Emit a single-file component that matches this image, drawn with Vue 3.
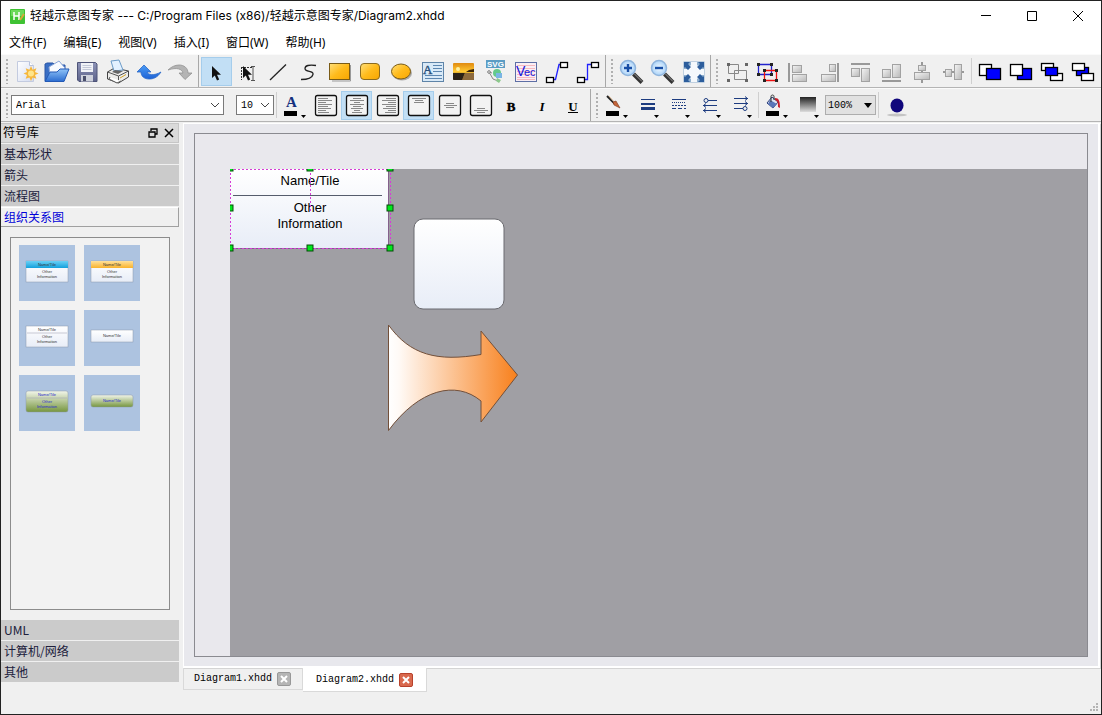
<script setup>
import { ref } from "vue";

const menus = ["文件(F)", "编辑(E)", "视图(V)", "插入(I)", "窗口(W)", "帮助(H)"];

const arrow = '<path d="M22 24h5l-2.500 3z"/>';
const box = '<rect x="5.500" y="4.500" width="21" height="20" rx="2" fill="#f3f3f3" stroke="#111" stroke-width="1.300"/>';
const cursor = (x) =>
    `<path transform="translate(${x} 9)" d="M0 0v12l2.800-2.600 2.200 5 2.200-1-2.200-4.700h4z" fill="#111"/>`;
const grey = 'fill="url(#g-grey)" stroke="#a2a2a2"';
const hollow = 'fill="#fff" stroke="#000" stroke-width="1.300"';
const solid = 'fill="#00f" stroke="#000" stroke-width="1.300"';

// Горизонтальные штрихи: [x1, x2, y]
const strokes = (list) =>
    `<path fill="none" stroke="#888" d="${list.map(([a, b, y]) => `M${a} ${y}.5H${b}`).join("")}"/>`;

const fileTools = [
    {
        name: "新建",
        icon: `<path d="M6.500 4.500h12l4 4v16h-16z" fill="url(#g-page)" stroke="#c3cbe0"/><path d="M18.500 4.500v4h4" fill="#fff" stroke="#b9c2da"/>
        <path d="M20 9l1.700 3.700 3.700-1.400-1.400 3.700 3.500 1.500-3.500 1.600 1.400 3.700-3.700-1.400L20 24l-1.600-3.600-3.700 1.400 1.300-3.700-3.500-1.600 3.500-1.500-1.300-3.700 3.700 1.400z" fill="#f6b73c"/><circle cx="20" cy="16.500" r="3" fill="#ffe58a"/>`,
    },
    {
        name: "打开",
        icon: `<path d="M3 24V7l2-1h6l2 2h10v8z" fill="#3a6fc4" stroke="#2a56a6"/><path d="M7 10l10-6 6 7-4 8H8z" fill="#f7faff" stroke="#8aa5d8"/>
        <path d="M3 24.500l5-9.500h7l3-3h9l-5 12.500z" fill="url(#g-folder)" stroke="#2359b5"/>`,
    },
    {
        name: "保存",
        icon: `<path d="M5 5.500h17.500l1.500 1.500v17.500H6L4.500 23V5.500z" fill="url(#g-disk)" stroke="#4e5478"/><rect x="8" y="6" width="12" height="9" fill="#f1f3f8"/>
        <path d="M9.500 8.500h9M9.500 10.500h9M9.500 12.500h9" stroke="#c3c8d8"/><rect x="8" y="18" width="12" height="6.500" fill="#cfd2dc"/><rect x="10" y="19" width="3" height="5" fill="#4a4f6c"/>`,
    },
    {
        name: "打印",
        icon: `<path d="M3.500 15l7-4 14 3v6l-10 6-11-4z" fill="#ececea" stroke="#444"/><path d="M7 4l8-1 4 10-9 1z" fill="#e3f1ff" stroke="#6b9bc8"/>
        <path d="M3.500 15l11 4 10-5M14.500 19v6" fill="none" stroke="#555"/><path d="M8 15l3-2 8 1-5 3z" fill="#666"/><path d="M6 20l-1 2 8 4 4-2" fill="#fff" stroke="#555"/><path d="M16 21l6-3.500" stroke="#d5a52a"/>`,
    },
    {
        name: "撤销",
        icon: `<path d="M2 15l7-7 7 7h-4c1 3 7 4 14 0-4 6-8 7-12 7-5 0-8-3-8-7z" fill="url(#g-undo)" stroke="#2a68c8" stroke-width=".8"/>`,
    },
    {
        name: "重做",
        icon: `<path d="M26 16l-7 6.500-6-6.500h4c-1-4-6-6-15-3 3-3 7-5 11-5 5 0 9 3 9 8z" fill="#b4b4b4" stroke="#929292" stroke-width=".8"/>`,
    },
];

const drawTools = [
    { name: "选择", icon: cursor(11) },
    {
        name: "文本选择",
        icon: `<path d="M9 10.500h12M9.500 10v13" fill="none" stroke="#333" stroke-dasharray="2 1"/>${cursor(11)}<path d="M19 9.500h4M21 10v13M19 23.500h4" stroke="#555" fill="none"/>`,
    },
    { name: "直线", icon: '<path d="M7 23L23 7.500" stroke="#222" stroke-width="1.300"/>' },
    {
        name: "曲线",
        icon: '<path d="M22 8.500c-7-1-11 0-11 3 0 4 9 2 8 6-1 4-7 5-12 5" fill="none" stroke="#222" stroke-width="1.300"/>',
    },
    {
        name: "矩形",
        icon: '<path d="M7 24h18.500V8" fill="none" stroke="#999"/><rect x="4.500" y="6.500" width="20" height="16" fill="url(#g-gold)" stroke="#7a5b16"/>',
    },
    {
        name: "圆角矩形",
        icon: '<rect x="4.500" y="6.500" width="19" height="16" rx="3.500" fill="url(#g-gold)" stroke="#8a6a20"/>',
    },
    {
        name: "椭圆",
        icon: '<ellipse cx="15" cy="16" rx="10" ry="7.500" fill="#aaa"/><ellipse cx="14" cy="14.500" rx="9.500" ry="7.500" fill="url(#g-gold)" stroke="#7a5b16"/>',
    },
    {
        name: "文本",
        icon: `<rect x="4.500" y="5.500" width="21" height="19" fill="#d8e9f7" stroke="#5e84a8"/><path d="M15 8.500h9M15 11.500h9M15 14.500h9M7 18.500h17M7 21.500h17" stroke="#5b86b0"/>
        <text x="5" y="17" font-size="13" font-family="Liberation Serif, serif" fill="#27507c" stroke="#27507c" stroke-width=".4">A</text>`,
    },
    {
        name: "图片",
        icon: `<rect x="4" y="6" width="21" height="17" rx="1" fill="url(#g-sunset)"/><path d="M4 15h21v-3l-5 1-3 2H4z" fill="#3b2408"/><path d="M4 16h12l-3 7H5l-1-1z" fill="#2b2116"/><path d="M16 16h9v6l-1 1h-11z" fill="#8d6a3c"/><circle cx="9" cy="12" r="2" fill="#fff0a0"/>`,
    },
    {
        name: "SVG",
        icon: `<rect x="6" y="3" width="19" height="8" fill="#5b9cc4"/><text x="7" y="10" font-size="8" font-weight="bold" font-family="Liberation Sans, sans-serif" fill="#fff">SVG</text>
        <circle cx="17" cy="16" r="4" fill="#63c98b"/><rect x="16" y="16" width="6" height="5" fill="#79b5e4"/><path d="M9 15l4 7 5 2M9 15l3 1" fill="none" stroke="#888"/><circle cx="9" cy="15" r="1.300" fill="#fff" stroke="#777"/><path d="M17 21l4 2-2 3-3-2z" fill="#8cc98c"/>`,
    },
    {
        name: "矢量文字",
        icon: `<rect x="4.500" y="5.500" width="21" height="19" fill="#f9eef4" stroke="#5d6fa5"/><path d="M6 8.500h18M6 11.500h18M6 14.500h18M6 17.500h18M6 20.500h18M6 22.500h18" stroke="#f5b9c0"/>
        <text x="5" y="19" font-size="14" font-family="Liberation Sans, sans-serif" fill="#1414dc">V</text><text x="13" y="19" font-size="11" font-family="Liberation Sans, sans-serif" fill="#1414dc">ec</text>`,
    },
    {
        name: "直线连接",
        icon: `<path d="M12 22.500h1.500L17 7.500h2" fill="none" stroke="#22f" stroke-width="1.300"/><rect x="18.500" y="5.500" width="7" height="5" ${hollow}/><rect x="4.500" y="20.500" width="7" height="5" ${hollow}/>`,
    },
    {
        name: "折线连接",
        icon: `<path d="M12 22.500h2.500v-15H18" fill="none" stroke="#22f" stroke-width="1.300"/><rect x="18.500" y="5.500" width="7" height="5" ${hollow}/><rect x="4.500" y="20.500" width="7" height="5" ${hollow}/>`,
    },
];

const lens =
    '<path d="M17.500 17l8.500 8.500" stroke="#333" stroke-width="4"/><path d="M18 16.500l8 8" stroke="#999"/><circle cx="12" cy="11" r="7.500" fill="url(#g-lens)" stroke="#8fb4dc" stroke-width="1.500"/>';

const zoomTools = [
    { name: "放大", icon: `${lens}<path d="M8 11h8M12 7v8" stroke="#174ea6" stroke-width="2.400"/>` },
    { name: "缩小", icon: `${lens}<path d="M8 11h8" stroke="#174ea6" stroke-width="2.400"/>` },
    {
        name: "适应窗口",
        icon: `<rect x="5.500" y="4.500" width="21" height="21" fill="#8fb0cf"/><rect x="10" y="8.500" width="12" height="13" fill="#fff"/><path d="M13 5h6v20h-6zM6 12h20v6H6z" fill="#f4f8fc"/>
        <path d="M6 5h6l-2 2 3 3-3 3-3-3-1 1zM26 5h-6l2 2-3 3 3 3 3-3 1 1zM6 25h6l-2-2 3-3-3-3-3 3-1-1zM26 25h-6l2-2-3-3 3-3 3 3 1-1z" fill="#2c5d9c"/>`,
    },
];

const arrangeTools = [
    {
        name: "组合",
        icon: '<path d="M7.500 7.500h10v9h-10zM13.500 13.500h12v9h-12z" fill="none" stroke="#888"/><path d="M6 6h3v3H6zM24 6h3v3h-3zM6 22h3v3H6zM24 22h3v3h-3z" fill="#666"/>',
    },
    {
        name: "取消组合",
        icon: `<path d="M6.500 7.500h13v10h-13z" fill="none" stroke="#22c" stroke-width="1.300"/><path d="M12.500 13.500h12v10h-12z" fill="none" stroke="#e11" stroke-width="1.300"/>
        <path d="M5 6h3v3H5zM18 6h3v3h-3zM5 16h3v3H5zM18 16h3v3h-3zM11 12h3v3h-3zM23 12h3v3h-3zM11 22h3v3h-3zM23 22h3v3h-3z" fill="#222"/>`,
    },
    {
        name: "左对齐",
        icon: `<path d="M6 6v19" stroke="#999" stroke-width="2"/><rect x="9.500" y="8.500" width="9" height="7" ${grey}/><rect x="9.500" y="17.500" width="14" height="7" ${grey}/>`,
    },
    {
        name: "右对齐",
        icon: `<path d="M24 6v19" stroke="#999" stroke-width="2"/><rect x="15.500" y="7.500" width="6" height="7" ${grey}/><rect x="7.500" y="17.500" width="14" height="7" ${grey}/>`,
    },
    {
        name: "顶端对齐",
        icon: `<path d="M6 7h19" stroke="#999" stroke-width="2"/><rect x="6.500" y="11.500" width="8" height="8" ${grey}/><rect x="16.500" y="11.500" width="8" height="13" ${grey}/>`,
    },
    {
        name: "底端对齐",
        icon: `<path d="M6 24h19" stroke="#999" stroke-width="2"/><rect x="6.500" y="12.500" width="8" height="8" ${grey}/><rect x="16.500" y="7.500" width="8" height="13" ${grey}/>`,
    },
    {
        name: "水平居中",
        icon: `<path d="M15 5v21" stroke="#999" stroke-width="2"/><rect x="11.500" y="8.500" width="7" height="5" ${grey}/><rect x="7.500" y="15.500" width="15" height="7" ${grey}/>`,
    },
    {
        name: "垂直居中",
        icon: `<path d="M5 15h21" stroke="#999" stroke-width="2"/><rect x="7.500" y="12.500" width="6" height="7" ${grey}/><rect x="16.500" y="7.500" width="7" height="15" ${grey}/>`,
    },
];

const orderTools = [
    {
        name: "置于顶层",
        icon: `<rect x="5.500" y="7.500" width="12" height="11" ${hollow}/><rect x="12.500" y="11.500" width="14" height="11" ${solid}/>`,
    },
    {
        name: "置于底层",
        icon: `<rect x="12.500" y="11.500" width="14" height="11" ${solid}/><rect x="5.500" y="7.500" width="12" height="11" ${hollow}/>`,
    },
    {
        name: "上移一层",
        icon: `<rect x="5.500" y="6.500" width="12" height="7" ${hollow}/><rect x="14.500" y="16.500" width="12" height="7" ${hollow}/><rect x="9.500" y="10.500" width="12" height="8" ${solid}/>`,
    },
    {
        name: "下移一层",
        icon: `<rect x="9.500" y="10.500" width="12" height="8" ${solid}/><rect x="5.500" y="6.500" width="12" height="7" ${hollow}/><rect x="14.500" y="16.500" width="12" height="7" ${hollow}/>`,
    },
];

const letter = (char, extra) =>
    `<text x="15" y="20" text-anchor="middle" font-size="13" font-family="Liberation Serif, serif" font-weight="bold" ${extra}>${char}</text>`;

const textTools = [
    {
        name: "字体颜色",
        icon: `<text x="7" y="16" font-size="15" font-weight="bold" font-family="Liberation Serif, serif" fill="#14307e">A</text><rect x="5" y="20" width="13" height="5"/>${arrow}`,
    },
    { name: "文本左对齐", icon: box + strokes([[8, 18, 7], [8, 22, 9], [8, 16, 11], [8, 22, 13], [8, 18, 15], [8, 21, 17], [8, 16, 19], [8, 19, 21]]) },
    { name: "文本居中", active: true, icon: box + strokes([[12, 20, 7], [9, 23, 9], [13, 19, 11], [9, 23, 13], [12, 20, 15], [10, 22, 17], [13, 19, 19], [11, 21, 21]]) },
    { name: "文本右对齐", icon: box + strokes([[14, 24, 7], [10, 24, 9], [16, 24, 11], [10, 24, 13], [14, 24, 15], [11, 24, 17], [16, 24, 19], [13, 24, 21]]) },
    { name: "文本顶端", active: true, icon: box + strokes([[9, 23, 7], [12, 20, 9], [11, 21, 11]]) },
    { name: "文本中部", icon: box + strokes([[12, 20, 12], [10, 23, 14], [12, 20, 16]]) },
    { name: "文本底端", icon: box + strokes([[12, 20, 17], [9, 23, 19], [12, 20, 21]]) },
    { name: "加粗", icon: letter("B", 'stroke="#000" stroke-width=".4"') },
    { name: "斜体", icon: letter("I", 'font-style="italic"') },
    { name: "下划线", icon: letter("U", "") + '<path d="M10 21.500h10" stroke="#000"/>' },
];

const lineTools = [
    {
        name: "线条颜色",
        icon: `<path d="M6 5l8 8" stroke="#222" stroke-width="2"/><path d="M8 5l6 7" stroke="#e9c7a4"/><path d="M12 11l3-1 4 7-6-3z" fill="#c5653a" stroke="#7c3518" stroke-width=".6"/><rect x="5" y="20" width="13" height="5"/>${arrow}`,
    },
    {
        name: "线宽",
        icon: `<path d="M9 8.500h14" stroke="#1d3c80"/><path d="M9 13h14" stroke="#1d3c80" stroke-width="2"/><path d="M9 17.500h14" stroke="#1d3c80" stroke-width="3"/>${arrow}`,
    },
    {
        name: "线型",
        icon: `<path d="M9 8.500h14" stroke="#1d3c80"/><path d="M9 11.500h14" stroke="#1d3c80" stroke-dasharray="1 1"/><path d="M9 14.500h14" stroke="#1d3c80" stroke-dasharray="2 1"/><path d="M9 17.500h14" stroke="#1d3c80" stroke-dasharray="4 2"/>${arrow}`,
    },
    {
        name: "起点样式",
        icon: `<g fill="none" stroke="#1d3c80"><circle cx="12" cy="9.500" r="2"/><path d="M14 9.500h9M9 14.500h14M12 12.500l-2.500 2 2.500 2M9 19.500h14M12 17.500l-2.500 2 2.500 2"/></g>${arrow}`,
    },
    {
        name: "终点样式",
        icon: `<g fill="none" stroke="#1d3c80"><path d="M9 7.500h14M20 5.500l2.500 2-2.500 2M9 12.500h14M20 10.500l2.500 2-2.500 2M9 17.500h9"/><circle cx="20" cy="17.500" r="2"/></g>${arrow}`,
    },
];

const fillTools = [
    {
        name: "填充颜色",
        icon: `<path d="M6 12l5-6 6 5-5 6z" fill="#dfe5f2" stroke="#2a3d78"/><path d="M9 9l7 4-4 4-5-4z" fill="#5a76b8"/><path d="M10 11V5.500c0-2 3-2 3 0V9" fill="none" stroke="#333"/><path d="M14 7c4 0 5 3 5 10l-2-1c0-4 0-6-3-7z" fill="#c8202c"/><rect x="5" y="20" width="13" height="5"/>${arrow}`,
    },
    { name: "渐变", icon: `<rect x="8" y="6" width="16" height="15" fill="url(#g-dark)"/>${arrow}` },
];

const shadowTool = '<ellipse cx="16" cy="24" rx="10" ry="1.500" fill="#c4c4c4"/><ellipse cx="16" cy="14.500" rx="6.500" ry="7" fill="#10067c"/>';

const activeTool = ref("选择");
const font = ref("Arial");
const fontSize = ref("10");
const zoom = ref("100%");

const upperGroups = ["基本形状", "箭头", "流程图", "组织关系图"];
const lowerGroups = ["UML", "计算机/网络", "其他"];
const activeGroup = ref("组织关系图");

const symbols = [
    { id: 1, head: "url(#g-cyan)", fill: "url(#g-card)", text: "#333", radius: 0, full: true },
    { id: 2, head: "url(#g-amber)", fill: "url(#g-card)", text: "#333", radius: 0, full: true },
    { id: 3, fill: "url(#g-card)", text: "#333", radius: 0, full: true },
    { id: 4, fill: "url(#g-card)", text: "#333", radius: 0, full: false },
    { id: 5, fill: "url(#g-green)", text: "#2a2acc", radius: 2, full: true },
    { id: 6, fill: "url(#g-green)", text: "#2a2acc", radius: 2, full: false },
];

const handles = [
    [0, 0], [80, 0], [160, 0],
    [0, 40], [160, 40],
    [0, 80], [80, 80], [160, 80],
];

const tabs = ["Diagram1.xhdd", "Diagram2.xhdd"];
const activeTab = ref("Diagram2.xhdd");
</script>

<template>
    <div class="window">
        <!-- Общие градиенты -->
        <svg class="defs" width="0" height="0" aria-hidden="true">
            <defs>
                <linearGradient id="g-page" x2="1" y2="1"><stop stop-color="#fff" /><stop offset="1" stop-color="#d3dbf0" /></linearGradient>
                <linearGradient id="g-folder" x2="0" y2="1"><stop stop-color="#8fc3f8" /><stop offset="1" stop-color="#2b6cd0" /></linearGradient>
                <linearGradient id="g-disk" x2="0" y2="1"><stop stop-color="#8e94b8" /><stop offset="1" stop-color="#5c628a" /></linearGradient>
                <linearGradient id="g-undo" x2="0" y2="1"><stop stop-color="#4b9cf5" /><stop offset="1" stop-color="#1e63d6" /></linearGradient>
                <linearGradient id="g-gold" x2="1" y2="1"><stop stop-color="#ffdf7a" /><stop offset=".5" stop-color="#ffbb1c" /><stop offset="1" stop-color="#f7a600" /></linearGradient>
                <linearGradient id="g-sunset" x2="0" y2="1"><stop stop-color="#e08a10" /><stop offset=".5" stop-color="#ffc832" /><stop offset="1" stop-color="#3b2408" /></linearGradient>
                <linearGradient id="g-grey" x2="1" y2="1"><stop stop-color="#f4f4f4" /><stop offset="1" stop-color="#b8b8b8" /></linearGradient>
                <linearGradient id="g-dark" x2="0" y2="1"><stop stop-color="#222" /><stop offset="1" stop-color="#ddd" /></linearGradient>
                <radialGradient id="g-lens"><stop stop-color="#f2f9ff" /><stop offset="1" stop-color="#a9d2f8" /></radialGradient>
                <linearGradient id="g-card" x2="0" y2="1"><stop stop-color="#fff" /><stop offset="1" stop-color="#e8edf7" /></linearGradient>
                <linearGradient id="g-cyan" x2="0" y2="1"><stop stop-color="#6ad0f5" /><stop offset="1" stop-color="#13a0dc" /></linearGradient>
                <linearGradient id="g-amber" x2="0" y2="1"><stop stop-color="#ffe09a" /><stop offset="1" stop-color="#f9b32c" /></linearGradient>
                <linearGradient id="g-green" x2="0" y2="1"><stop stop-color="#f2f5ea" /><stop offset="1" stop-color="#76963e" /></linearGradient>
                <linearGradient id="g-orange"><stop stop-color="#fff" /><stop offset=".08" stop-color="#fffaf6" /><stop offset="1" stop-color="#f8801c" /></linearGradient>
            </defs>
        </svg>

        <header class="title-bar">
            <svg class="logo" width="15" height="15" viewBox="0 0 15 15">
                <rect width="15" height="15" rx="1" fill="#3fc233" />
                <rect x="1" y="1" width="13" height="6" fill="#6bd95a" />
                <path d="M4 3v8M4 7h5M9 3v8" stroke="#fff" stroke-width="1.500" fill="none" />
                <path d="M10 11l4-6" stroke="#d8a838" stroke-width="2" />
            </svg>
            <h1>轻越示意图专家 --- C:/Program Files (x86)/轻越示意图专家/Diagram2.xhdd</h1>
            <div class="window-buttons">
                <button type="button" aria-label="最小化"><svg width="12" height="12"><path d="M1 5.500h10" stroke="#000" /></svg></button>
                <button type="button" aria-label="最大化"><svg width="12" height="12"><path d="M1.500 1.500h9v9h-9z" fill="none" stroke="#000" /></svg></button>
                <button type="button" aria-label="关闭"><svg width="12" height="12"><path d="M1 1l10 10M11 1L1 11" stroke="#000" /></svg></button>
            </div>
        </header>

        <nav class="menu-bar">
            <button v-for="menu in menus" :key="menu" type="button">{{ menu }}</button>
        </nav>

        <div class="toolbar">
            <div class="group">
                <span class="grip"></span>
                <button v-for="tool in fileTools" :key="tool.name" class="tool" type="button" :aria-label="tool.name">
                    <svg width="31" height="29" v-html="tool.icon"></svg>
                </button>
            </div>
            <div class="group draw">
                <button
                    v-for="tool in drawTools"
                    :key="tool.name"
                    class="tool"
                    :class="{ active: tool.name === activeTool }"
                    type="button"
                    :aria-label="tool.name"
                    @click="activeTool = tool.name"
                >
                    <svg width="31" height="29" v-html="tool.icon"></svg>
                </button>
            </div>
            <div class="group">
                <span class="grip"></span>
                <button v-for="tool in zoomTools" :key="tool.name" class="tool" type="button" :aria-label="tool.name">
                    <svg width="31" height="29" v-html="tool.icon"></svg>
                </button>
            </div>
            <div class="group last">
                <span class="grip"></span>
                <button v-for="tool in arrangeTools" :key="tool.name" class="tool" type="button" :aria-label="tool.name">
                    <svg width="31" height="29" v-html="tool.icon"></svg>
                </button>
                <span class="separator"></span>
                <button v-for="tool in orderTools" :key="tool.name" class="tool" type="button" :aria-label="tool.name">
                    <svg width="31" height="29" v-html="tool.icon"></svg>
                </button>
            </div>
        </div>

        <div class="toolbar">
            <div class="group">
                <span class="grip"></span>
                <div class="combo font">
                    <select v-model="font" aria-label="字体">
                        <option>Arial</option>
                        <option>SimSun</option>
                    </select>
                    <svg width="10" height="6"><path d="M1 1l4 4 4-4" fill="none" stroke="#444" /></svg>
                </div>
                <div class="combo size">
                    <select v-model="fontSize" aria-label="字号">
                        <option>10</option>
                        <option>12</option>
                    </select>
                    <svg width="10" height="6"><path d="M1 1l4 4 4-4" fill="none" stroke="#444" /></svg>
                </div>
                <span class="separator"></span>
                <button
                    v-for="tool in textTools"
                    :key="tool.name"
                    class="tool"
                    :class="{ active: tool.active }"
                    type="button"
                    :aria-label="tool.name"
                >
                    <svg width="31" height="29" v-html="tool.icon"></svg>
                </button>
            </div>
            <div class="group last">
                <span class="grip"></span>
                <button v-for="tool in lineTools" :key="tool.name" class="tool" type="button" :aria-label="tool.name">
                    <svg width="31" height="29" v-html="tool.icon"></svg>
                </button>
                <span class="separator"></span>
                <button v-for="tool in fillTools" :key="tool.name" class="tool" type="button" :aria-label="tool.name">
                    <svg width="31" height="29" v-html="tool.icon"></svg>
                </button>
                <div class="combo zoom">
                    <select v-model="zoom" aria-label="透明度">
                        <option>100%</option>
                        <option>50%</option>
                    </select>
                    <svg width="8" height="5"><path d="M0 0h8L4 5z" /></svg>
                </div>
                <span class="separator"></span>
                <button class="tool" type="button" aria-label="阴影">
                    <svg width="31" height="29" v-html="shadowTool"></svg>
                </button>
            </div>
        </div>

        <div class="body">
            <aside class="library">
                <div class="dock-title">
                    <h2>符号库</h2>
                    <button type="button" aria-label="浮动">
                        <svg width="10" height="10"><path d="M3 3V1h6v5H7M1 4h6v5H1z" fill="none" stroke="#000" stroke-width="1.300" /></svg>
                    </button>
                    <button type="button" aria-label="关闭面板">
                        <svg width="10" height="10"><path d="M1 1l8 8M9 1L1 9" stroke="#000" stroke-width="1.500" /></svg>
                    </button>
                </div>
                <button
                    v-for="name in upperGroups"
                    :key="name"
                    class="category"
                    :class="{ active: name === activeGroup }"
                    type="button"
                    @click="activeGroup = name"
                >
                    {{ name }}
                </button>
                <div class="symbols">
                    <button v-for="item in symbols" :key="item.id" type="button" :aria-label="'符号 ' + item.id">
                        <svg width="56" height="56">
                            <template v-if="item.full">
                                <rect x="7" y="16" width="42" height="21" :rx="item.radius" :fill="item.fill" stroke="#8c98ab" stroke-width=".5" />
                                <rect v-if="item.head" x="7" y="16" width="42" height="7" :fill="item.head" />
                                <path v-else d="M8 23h40" stroke="#aab" stroke-width=".6" />
                                <text x="28" y="21" :fill="item.text">Name/Tile</text>
                                <text x="28" y="28" :fill="item.text">Other</text>
                                <text x="28" y="33" :fill="item.text">Information</text>
                            </template>
                            <template v-else>
                                <rect x="7" y="20" width="42" height="12" :rx="item.radius" :fill="item.fill" stroke="#8c98ab" stroke-width=".5" />
                                <text x="28" y="27" :fill="item.text">Name/Tile</text>
                            </template>
                        </svg>
                    </button>
                </div>
                <button v-for="name in lowerGroups" :key="name" class="category" type="button" @click="activeGroup = name">
                    {{ name }}
                </button>
            </aside>

            <main>
                <div class="frame">
                    <div class="canvas">
                        <svg class="page">
                            <rect x="0" y="0" width="159" height="79" fill="url(#g-card)" />
                            <path d="M0 79.500h159M158.500 0v79" stroke="#84608c" />
                            <path d="M3 26.500h149" stroke="#555c6c" />
                            <g class="card-text">
                                <text x="80" y="16">Name/Tile</text>
                                <text x="80" y="43">Other</text>
                                <text x="80" y="59">Information</text>
                            </g>
                            <path class="guide" d="M.5 0v80M0 .5h160M160.500 0v80M0 79.500h160M80.500 0v43" />
                            <rect v-for="([x, y], i) in handles" :key="i" class="handle" :x="x - 3" :y="y - 4" width="6" height="6" />

                            <rect x="184" y="50" width="90" height="90" rx="9" fill="url(#g-card)" stroke="#6b6b70" />
                            <path
                                d="M158.500 156C180 186 207 193 251 185.500V162L287.500 206 251 253V232C226 211 189 220 158.500 261.500z"
                                fill="url(#g-orange)"
                                stroke="#73503a"
                            />
                        </svg>
                    </div>
                </div>
                <div class="tabs">
                    <div v-for="tab in tabs" :key="tab" class="tab" :class="{ active: tab === activeTab }">
                        <button class="tab-name" type="button" @click="activeTab = tab">{{ tab }}</button>
                        <button class="tab-close" type="button" :aria-label="'关闭 ' + tab">
                            <svg width="8" height="8"><path d="M1 1l6 6M7 1L1 7" stroke="#fff" stroke-width="2" /></svg>
                        </button>
                    </div>
                </div>
            </main>
        </div>

        <footer class="status-bar">
            <svg width="9" height="9"><path d="M6 0h2v2H6zM3 3h2v2H3zM6 3h2v2H6zM0 6h2v2H0zM3 6h2v2H3zM6 6h2v2H6z" fill="#b4b4b4" /></svg>
        </footer>
    </div>
</template>

<style>
body {
    margin: 0;
}
</style>

<style scoped>
* {
    box-sizing: border-box;
}

button,
select {
    margin: 0;
    padding: 0;
    border: none;
    border-radius: 0;
    background: none;
    color: inherit;
    font: inherit;
}

svg {
    display: block;
}

.window {
    display: flex;
    flex-direction: column;
    height: 100vh;
    border: 1px solid #222;
    background: #f0f0f0;
    color: #000;
    font: 12px/16px "Noto Sans", "Noto Sans CJK SC", sans-serif;
}

.defs {
    position: absolute;
}

.title-bar {
    display: flex;
    align-items: center;
    height: 30px;
    padding-left: 9px;
    background: #fff;
}

h1 {
    flex: 1;
    margin: 0 0 0 5px;
    font: 12px/16px Inter, "Noto Sans CJK SC", sans-serif;
    white-space: nowrap;
}

.window-buttons {
    display: flex;
}

.window-buttons button {
    display: grid;
    place-items: center;
    width: 46px;
    height: 28px;
}

.menu-bar {
    display: flex;
    align-items: center;
    gap: 17px;
    height: 23px;
    padding-left: 8px;
    background: #fff;
}

.toolbar {
    display: flex;
    height: 34px;
    border-top: 1px solid #fafafa;
    border-bottom: 1px solid #b4b4b4;
}

.group {
    display: flex;
    align-items: center;
    padding-right: 1px;
    border-right: 1px solid #a8a8a8;
}

.group.draw {
    padding-left: 2px;
}

.group.last {
    border-right: none;
}

.grip {
    width: 10px;
    height: 26px;
    background: radial-gradient(circle, #b0b0b0 1px, transparent 1px) 4px 0 / 4px 4px repeat-y;
}

.separator {
    width: 5px;
    height: 26px;
    background: linear-gradient(#cfcfcf, #cfcfcf) 2px 0 / 1px 100% no-repeat;
}

.tool {
    width: 31px;
    height: 29px;
}

.tool.active {
    background: #c2dff5;
    box-shadow: inset 0 0 0 1px #a5cdec;
}

.combo {
    display: grid;
    align-items: center;
    height: 20px;
    border: 1px solid #7a7a7a;
    background: #fff;
    font: 10px/16px "Liberation Mono", "Noto Sans CJK SC", monospace;
}

.combo select,
.combo svg {
    grid-area: 1 / 1;
}

.combo select {
    width: 100%;
    height: 18px;
    padding: 2px 0 0 4px;
    appearance: none;
    outline: none;
}

.combo svg {
    justify-self: end;
    margin-right: 3px;
    pointer-events: none;
}

.combo.font {
    width: 213px;
}

.combo.size {
    width: 38px;
    margin-left: 12px;
}

.combo.zoom {
    width: 51px;
    margin-left: 2px;
    border-color: #adadad;
    background: #e1e1e1;
}

.combo.zoom select {
    padding-left: 2px;
}

.body {
    display: flex;
    flex: 1;
    gap: 4px;
    min-height: 0;
}

.library {
    display: flex;
    flex-direction: column;
    gap: 1px;
    width: 178px;
    padding-bottom: 10px;
    background: #f0f0f0;
}

.dock-title {
    display: flex;
    align-items: center;
    gap: 6px;
    height: 20px;
    margin-top: 1px;
    padding: 0 4px 0 2px;
    border: 1px solid #c6c6c6;
    border-left: none;
    background: #dadada;
}

.dock-title h2 {
    flex: 1;
    margin: 0;
    font-size: 12px;
    font-weight: normal;
}

.category {
    height: 20px;
    padding-left: 3px;
    background: #cbcbcb;
    color: #20203c;
    font: 12px/18px "Noto Sans CJK SC", sans-serif;
    text-align: left;
}

.category.active {
    border: 1px solid #a0a0a0;
    border-top-color: #fff;
    border-left: none;
    background: #f0f0f0;
    color: #0000d8;
}

.symbols {
    display: grid;
    flex: 1;
    grid-template-columns: 56px 56px;
    align-content: start;
    gap: 9px;
    min-height: 0;
    margin: 9px 9px 9px;
    padding: 7px 8px;
    border: 1px solid #8c8c8c;
    background: #f2f2f2;
}

.symbols button {
    height: 56px;
    background: #adc3e0;
}

.symbols text {
    font: 4px "Liberation Sans", sans-serif;
    text-anchor: middle;
}

main {
    display: flex;
    flex: 1;
    flex-direction: column;
    min-width: 0;
    padding: 1px 1px 0 0;
}

.frame {
    display: flex;
    flex: 1;
    min-height: 0;
    padding: 9px 10px;
    border: 1px solid #fff;
    border-width: 1px 2px 2px 1px;
    box-shadow: 1px 1px 0 #d4d4d4;
    background: #e8e8ed;
}

.canvas {
    display: flex;
    flex: 1;
    padding: 35px 0 0 35px;
    border: 1px solid #8a8a90;
    background: #e9e8ed;
}

.page {
    flex: 1;
    width: 100%;
    height: 100%;
    overflow: hidden;
    background: #a09fa4;
}

.card-text {
    font: 13px "Liberation Sans", sans-serif;
    text-anchor: middle;
}

.guide {
    fill: none;
    stroke: #d63cd6;
    stroke-dasharray: 2 2;
}

.handle {
    fill: #00e81c;
    stroke: #064d0a;
}

.tabs {
    display: flex;
    align-items: flex-start;
    height: 24px;
    font: 10px/20px "Liberation Mono", monospace;
}

.tab {
    display: flex;
    align-items: center;
    gap: 5px;
    height: 22px;
    padding: 0 11px 0 10px;
    border: 1px solid #d9d9d9;
    border-top: none;
}

.tab.active {
    height: 24px;
    padding: 0 13px 0 13px;
    border-left: none;
    background: #fff;
}

.tab-close {
    display: grid;
    place-items: center;
    width: 14px;
    height: 14px;
    border: 1px solid #989898;
    border-radius: 2px;
    background: #b5b5b5;
}

.tab.active .tab-close {
    border-color: #b8422c;
    background: #d9694e;
}

.status-bar {
    display: flex;
    align-items: flex-end;
    justify-content: flex-end;
    height: 22px;
    padding: 0 2px 2px 0;
}
</style>
